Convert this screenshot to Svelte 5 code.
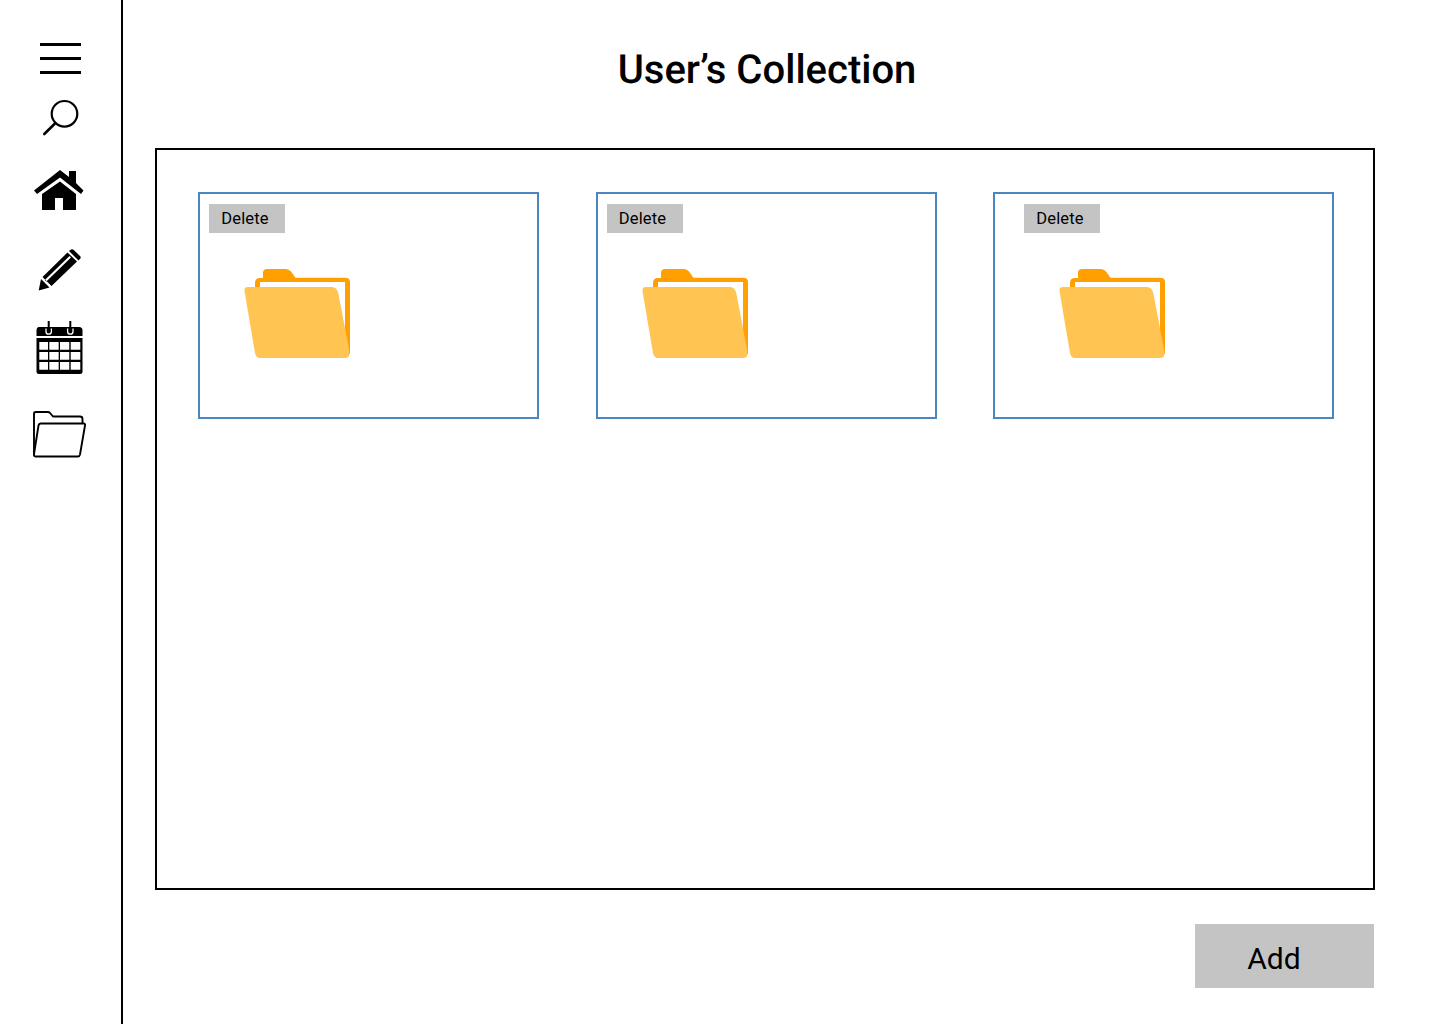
<script lang="ts">
	const cards = [{ shifted: false }, { shifted: false }, { shifted: true }];
</script>

<div class="page">
	<nav class="sidebar">
		<button class="menu" aria-label="Menu"><span></span><span></span><span></span></button>
		<svg class="icon search" width="40" height="40" viewBox="0 0 40 40" fill="none" stroke="#000">
			<circle cx="24.500" cy="15.800" r="12.800" stroke-width="2.200" />
			<path d="M14.500 26 L4.300 36" stroke-width="2.600" stroke-linecap="round" />
		</svg>
		<svg class="icon home" width="50" height="41" viewBox="0 0 50 41" fill="#000">
			<path d="M0 20.500 L26 0 L35 7 V1 H42 V13 L49.500 20.500 L47 24 L26 7.500 L3 24 Z" />
			<path d="M26 11.500 L42 24 V40 H29 V28 H21 V40 H8 V24 Z" />
		</svg>
		<svg class="icon pencil" width="44" height="44" viewBox="0 0 44 44" fill="#000">
			<path d="M0.700 41.500 L3 30 L11.500 38.500 Z" />
			<path fill-rule="evenodd" d="M4.500 28 L29.500 3.500 L39 12.500 L13.500 37 Z M6.800 31 L8.300 32.500 L33 8.500 L31.500 7 Z" />
			<path d="M31 2 L33 0.500 Q34.300 -0.300 35.500 0.800 L42.200 7.200 Q43.200 8.300 42.300 9.500 L40.500 11.500 Z" />
		</svg>
		<svg class="icon calendar" width="47" height="54" viewBox="0 0 47 54" fill="#000">
			<path d="M3 6 H43 Q46.500 6 46.500 9.500 V15 H0.500 V9.500 Q0.500 6 3 6 Z" />
			<path fill-rule="evenodd" d="M0.500 17 H46.500 V50.500 Q46.500 53 44 53 H3 Q0.500 53 0.500 50.500 Z M3.300 21 V28.700 H12 V21 Z M13.300 21 V28.700 H22.700 V21 Z M24 21 V28.700 H33.300 V21 Z M34.700 21 V28.700 H44.300 V21 Z M3.300 31 V38.700 H12 V31 Z M13.300 31 V38.700 H22.700 V31 Z M24 31 V38.700 H33.300 V31 Z M34.700 31 V38.700 H44.300 V31 Z M3.300 41 V48.700 H12 V41 Z M13.300 41 V48.700 H22.700 V41 Z M24 41 V48.700 H33.300 V41 Z M34.700 41 V48.700 H44.300 V41 Z" />
			<path d="M10 7.500 V10.500 A2.700 2.700 0 0 0 15.400 10.500 V7.500 M31.600 7.500 V10.500 A2.700 2.700 0 0 0 37 10.500 V7.500" fill="none" stroke="#fff" stroke-width="1.300" />
			<path d="M12.700 0 V9.500 M34.300 0 V9.500" stroke="#000" stroke-width="2" />
		</svg>
		<svg class="icon folder" width="54" height="48" viewBox="0 0 54 48" fill="none" stroke="#000" stroke-width="1.900" stroke-linejoin="round">
			<path d="M2 45 V3.500 Q2 2 4 2 H16 Q17 2 18 3 L21 6.500 H48 Q50.500 6.500 50.500 9 V13" />
			<path d="M9 13.500 H51.500 Q53.500 13.500 53 15.500 L48 44.500 Q47.500 46.500 46 46.500 H3.500 Q1.500 46.500 2 44 L6.500 15.500 Q7 13.500 9 13.500 Z" />
		</svg>
	</nav>

	<main class="content">
		<h1>User’s Collection</h1>
		<section class="frame">
			{#each cards as card}
				<article class="card" class:shifted={card.shifted}>
					<button class="delete">Delete</button>
					<svg class="folder-art" width="106" height="90" viewBox="0 0 106 90">
						<path d="M11 15 Q11 10 16 10 H19 V5 Q19 1 23 1 H42 Q45 1 47 3.500 L51.500 9.700 H101 Q106 9.700 106 14 V86 H101 V14 H16 V19 H11 Z" fill="#ff9f00" />
						<path d="M4 19 H88 Q93 19 94.500 26 L105.500 84 Q106 90 101 90 H16 Q12 90 11 85 L0.500 23 Q0 19 4 19 Z" fill="#ffc452" />
					</svg>
				</article>
			{/each}
		</section>
		<div class="actions">
			<button class="add">Add</button>
		</div>
	</main>
</div>

<style>
	:global(body) {
		background: #fff;
		font-family: Roboto, "Liberation Sans", sans-serif;
		color: #000;
		text-rendering: geometricPrecision;
	}

	button {
		border: 0;
		font-family: inherit;
		color: #000;
		cursor: pointer;
	}

	.page {
		display: flex;
		height: 1024px;
		overflow: hidden;
	}

	.sidebar {
		width: 123px;
		flex-shrink: 0;
		box-sizing: border-box;
		border-right: 2px solid #000;
		display: flex;
		flex-direction: column;
		padding-top: 43px;
	}

	.menu {
		width: 41px;
		height: 31px;
		margin-left: 40px;
		padding: 0;
		background: none;
		display: flex;
		flex-direction: column;
		justify-content: space-between;
	}

	.menu span {
		height: 3px;
		background: #000;
	}

	.icon {
		display: block;
		overflow: visible;
	}

	.search {
		margin: 24px 0 0 40px;
	}

	.home {
		margin: 32px 0 0 34px;
	}

	.pencil {
		margin: 38px 0 0 38px;
	}

	.calendar {
		margin: 28px 0 0 36px;
	}

	.folder {
		margin: 35px 0 0 32px;
	}

	.content {
		flex: 1;
		padding: 0 58px 0 32px;
	}

	h1 {
		margin: 0;
		padding: 46px 0 0 4px;
		height: 148px;
		box-sizing: border-box;
		text-align: center;
		font-size: 40px;
		line-height: 47px;
		font-weight: 500;
	}

	.frame {
		height: 742px;
		box-sizing: border-box;
		border: 2px solid #000;
		padding: 42px 39px 0 41px;
		display: grid;
		grid-template-columns: repeat(3, 341px);
		justify-content: space-between;
		align-content: start;
	}

	.card {
		height: 227px;
		box-sizing: border-box;
		border: 2px solid #4a86c1;
		padding: 10px 9px;
	}

	.card.shifted {
		padding-left: 29px;
	}

	.delete {
		display: block;
		width: 76px;
		height: 29px;
		padding: 0 4px 0 0;
		background: #c4c4c4;
		font-size: 16.500px;
		letter-spacing: 0.150px;
	}

	.folder-art {
		display: block;
		margin: 35px 0 0 35px;
	}

	.actions {
		display: flex;
		justify-content: flex-end;
		padding: 34px 1px 0 0;
	}

	.add {
		width: 179px;
		height: 64px;
		background: #c4c4c4;
		font-size: 30px;
		padding: 4px 21px 0 0;
	}
</style>
